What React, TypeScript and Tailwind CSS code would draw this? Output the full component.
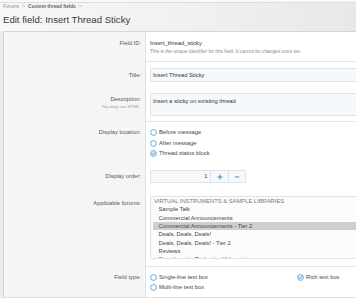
import React from "react";

function Radio({ checked = false }: { checked?: boolean }) {
  return (
    <svg width="7" height="7" viewBox="0 0 7 7" className="shrink-0">
      <circle cx="3.5" cy="3.5" r="2.9" fill={checked ? "#e1eefa" : "#ffffff"} stroke={checked ? "#5fa6de" : "#4a9fe3"} strokeWidth="0.9" />
      {checked && <path d="M2.1 3.6 L3.1 4.6 L4.9 2.5" fill="none" stroke="#3f8fd3" strokeWidth="0.9" strokeLinecap="round" strokeLinejoin="round" />}
    </svg>
  );
}

function RadioItem({ label, checked = false }: { label: string; checked?: boolean }) {
  return (
    <div className="flex items-center gap-[2px] h-[10.7px] text-[#444]">
      <Radio checked={checked} />
      <span>{label}</span>
    </div>
  );
}

export default function App() {
  const forums = [
    "Sample Talk",
    "Commercial Announcements",
    "Commercial Announcements - Tier 2",
    "Deals, Deals, Deals!",
    "Deals, Deals, Deals! - Tier 2",
    "Reviews",
    "Samplecasts, Podcasts, Videocasts",
  ];
  return (
    <div className="w-[356px] h-[300px] overflow-hidden bg-[#ebebeb] font-['Liberation_Sans',Arial,sans-serif] text-[5.8px] text-[#444]">
      {/* header */}
      <div className="h-[31px] bg-linear-to-r from-[#f7f7f7] via-[#f1f1f1] to-[#e8e8e8]">
        <div className="h-[3px] border-b border-[#dedede] bg-[#f8f8f8]" />
        <div className="pl-[3px] h-[7px] leading-[7px] text-[4.8px] text-[#8a8a8a] flex items-center gap-[3px]">
          <span>Forums</span>
          <span className="text-[#aaa]">&gt;</span>
          <span className="text-[#666] font-bold">Custom thread fields</span>
          <span className="text-[#aaa]">&gt;</span>
        </div>
        <div className="pl-[3px] mt-[4px] text-[9.6px] leading-[12px] text-[#3a3a3a]">Edit field: Insert Thread Sticky</div>
      </div>

      {/* panel */}
      <div className="ml-[3px] w-[446px] border-l border-t border-[#d6d6d6] bg-white">
        {/* Field ID */}
        <div className="flex">
          <div className="w-[142px] shrink-0 bg-[#f5f5f5] border-r border-[#e0e0e0] text-right pr-[4px] pt-[7px] leading-[8px] text-[#555]">Field ID:</div>
          <div className="flex-1 pl-[4px] pt-[7px] pb-[5px] border-b border-[#e4e4e4]">
            <div className="leading-[8px] text-[#333]">Insert_thread_sticky</div>
            <div className="mt-[1px] leading-[8px] text-[4.8px] text-[#8c8c8c]">This is the unique identifier for this field. It cannot be changed once set.</div>
          </div>
        </div>

        {/* Title */}
        <div className="flex">
          <div className="w-[142px] shrink-0 bg-[#f5f5f5] border-r border-[#e0e0e0] text-right pr-[4px] pt-[6px] leading-[14px] text-[#555]">Title:</div>
          <div className="flex-1 pl-[4px] pr-[4px] pt-[6px] pb-[5px]">
            <div className="h-[14px] border border-[#dfe3e7] bg-[#f6f9fc] rounded-[1px] pl-[2px] leading-[12px] text-[#333]">Insert Thread Sticky</div>
          </div>
        </div>

        {/* Description */}
        <div className="flex">
          <div className="w-[142px] shrink-0 bg-[#f5f5f5] border-r border-[#e0e0e0] text-right pr-[4px] pt-[8px] text-[#555]">
            <div className="leading-[8px]">Description:</div>
            <div className="leading-[8px] text-[4.4px] text-[#999]">You may use HTML.</div>
          </div>
          <div className="flex-1 pl-[4px] pr-[4px] pt-[6px] pb-[5px] border-b border-[#e4e4e4]">
            <div className="h-[23px] border border-[#dfe3e7] bg-[#f6f9fc] rounded-[1px] pl-[2px] pt-[3px] leading-[8px] text-[#333]">Insert a sticky on existing thread</div>
          </div>
        </div>

        {/* Display location */}
        <div className="flex">
          <div className="w-[142px] shrink-0 bg-[#f5f5f5] border-r border-[#e0e0e0] text-right pr-[4px] pt-[5px] leading-[10.7px] text-[#555]">Display location:</div>
          <div className="flex-1 pl-[4px] pt-[5px] pb-[6px]">
            <RadioItem label="Before message" />
            <RadioItem label="After message" />
            <RadioItem label="Thread status block" checked />
          </div>
        </div>

        {/* Display order */}
        <div className="flex">
          <div className="w-[142px] shrink-0 bg-[#f5f5f5] border-r border-[#e0e0e0] text-right pr-[4px] pt-[5px] leading-[13px] text-[#555]">Display order:</div>
          <div className="flex-1 pl-[4px] pt-[5px] pb-[6px]">
            <div className="flex h-[13px] w-[96px] border border-[#dfe3e7] bg-[#f6f9fc] rounded-[1px]">
              <div className="w-[60px] text-right pr-[3px] leading-[11px] text-[#333]">1</div>
              <div className="w-[18px] border-l border-[#dfe3e7] flex items-center justify-center">
                <svg width="6" height="6" viewBox="0 0 6 6"><path d="M3 0.5 V5.5 M0.5 3 H5.5" stroke="#2d7fc1" strokeWidth="0.9" /></svg>
              </div>
              <div className="w-[17px] border-l border-[#dfe3e7] flex items-center justify-center">
                <svg width="6" height="6" viewBox="0 0 6 6"><path d="M0.8 3 H5.2" stroke="#2d7fc1" strokeWidth="0.9" /></svg>
              </div>
            </div>
          </div>
        </div>

        {/* Applicable forums */}
        <div className="flex">
          <div className="w-[142px] shrink-0 bg-[#f5f5f5] border-r border-[#e0e0e0] text-right pr-[4px] pt-[10px] leading-[8px] text-[#555]">Applicable forums:</div>
          <div className="flex-1 pl-[4px] pr-[4px] pt-[7px] pb-[7px] border-b border-[#e4e4e4]">
            <div className="h-[63px] overflow-hidden border border-[#dfe3e7] bg-[#fbfcfd] rounded-[1px] pl-[1.5px]">
              <div className="pl-[1.5px] leading-[8.3px] text-[#7a7a7a]">VIRTUAL INSTRUMENTS &amp; SAMPLE LIBRARIES</div>
              {forums.map((f, i) => (
                <div key={f} className={"pl-[6px] leading-[8.3px] text-[#444] " + (i === 2 ? "bg-[#cfcfcf]" : "")}>{f}</div>
              ))}
            </div>
          </div>
        </div>

        {/* Field type */}
        <div className="flex border-b border-[#e0e0e0]">
          <div className="w-[142px] shrink-0 bg-[#f5f5f5] border-r border-[#e0e0e0] text-right pr-[4px] pt-[5px] leading-[10px] text-[#555]">Field type:</div>
          <div className="flex-1 pl-[4px] pt-[5px] pb-[5px]">
            <div className="grid grid-cols-2 w-[294px]">
              <div>
                <div className="flex items-center gap-[2px] h-[10px]"><Radio /><span>Single-line text box</span></div>
                <div className="flex items-center gap-[2px] h-[10px]"><Radio /><span>Multi-line text box</span></div>
              </div>
              <div>
                <div className="flex items-center gap-[2px] h-[10px]"><Radio checked /><span>Rich text box</span></div>
              </div>
            </div>
          </div>
        </div>
      </div>
      <div className="h-[10px] bg-white" />
    </div>
  );
}
